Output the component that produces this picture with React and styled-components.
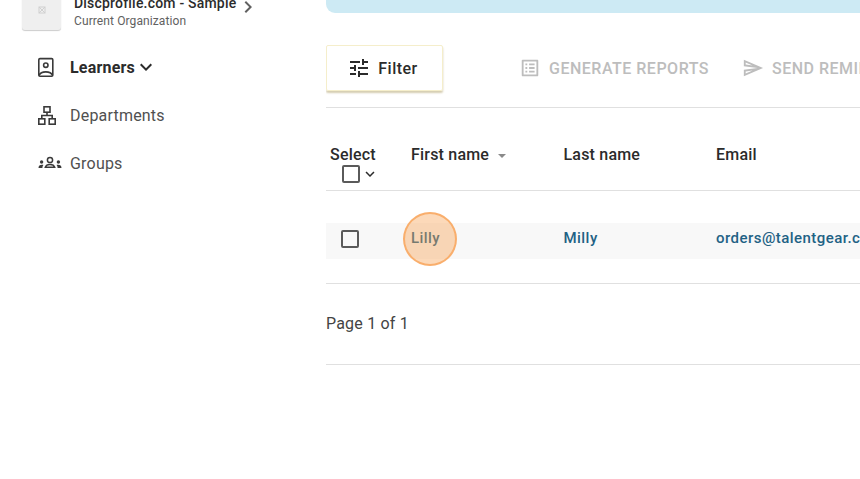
import React from 'react';
import styled, { createGlobalStyle } from 'styled-components';
import { MdTune, MdOutlineListAlt, MdOutlineSend, MdChevronRight, MdKeyboardArrowDown } from 'react-icons/md';

const GlobalStyle = createGlobalStyle`
  html, body {
    margin: 0;
    height: 100%;
    overflow: hidden;
    background: #fff;
    font-family: Roboto, "Liberation Sans", sans-serif;
  }
`;

const Page = styled.div`
  width: 860px;
  height: 479px;
  overflow: hidden;
  display: flex;
`;

const Sidebar = styled.aside`
  width: 326px;
  flex: none;
  margin-top: -10px;
  padding-left: 22px;
  box-sizing: border-box;
`;

const OrgRow = styled.div`
  display: flex;
  align-items: flex-start;
  height: 40px;
`;

const OrgLogo = styled.div`
  width: 39px;
  height: 40px;
  background: #efefef;
  border-radius: 3px;
  box-shadow: 0 1px 1px rgba(0, 0, 0, 0.2);
  display: flex;
  align-items: center;
  justify-content: center;
  color: #d0d0d0;
`;

const OrgText = styled.div`
  margin-left: 13px;
  padding-top: 4px;
`;

const OrgName = styled.div`
  font-size: 14px;
  font-weight: 500;
  line-height: 18px;
  letter-spacing: 0.2px;
  color: #2b2b2b;
  white-space: nowrap;
`;

const OrgSub = styled.div`
  font-size: 12px;
  line-height: 18px;
  letter-spacing: 0.1px;
  color: #616161;
  white-space: nowrap;
`;

const OrgArrow = styled(MdChevronRight)`
  color: #616161;
  font-size: 24px;
  margin-top: 5px;
`;

const Nav = styled.nav`
  margin-top: 13px;
  padding-left: 16px;
`;

const NavItem = styled.div`
  display: flex;
  align-items: center;
  height: 48px;
  font-size: 16px;
  letter-spacing: 0.2px;
  color: ${p => (p.$active ? '#2b2b2b' : '#505050')};
  font-weight: ${p => (p.$active ? 700 : 400)};
`;

const NavIcon = styled.span`
  width: 32px;
  flex: none;
  display: flex;
  align-items: center;
  color: #3a3a3a;
`;

const NavCaret = styled(MdKeyboardArrowDown)`
  font-size: 24px;
  margin-left: -1px;
  color: #2b2b2b;
`;

const Main = styled.main`
  flex: 1;
  min-width: 0;
  overflow: hidden;
`;

const Banner = styled.div`
  height: 13px;
  width: 600px;
  background: #cdeaf4;
  border-radius: 0 0 0 9px;
`;

const Toolbar = styled.div`
  display: flex;
  align-items: center;
  margin-top: 32px;
  height: 46px;
  padding-bottom: 16px;
  border-bottom: 1px solid #e0e0e0;
  width: 700px;
`;

const FilterButton = styled.div`
  width: 117px;
  height: 46px;
  box-sizing: border-box;
  padding-right: 4px;
  display: flex;
  align-items: center;
  justify-content: center;
  gap: 7px;
  border: 1px solid #f5eecb;
  border-radius: 2px;
  box-shadow: 0 2px 2px rgba(150, 130, 60, 0.4);
  font-size: 16px;
  font-weight: 500;
  letter-spacing: 0.5px;
  color: #2b2b2b;
`;

const ActionButton = styled.div`
  display: flex;
  align-items: center;
  flex: none;
  gap: 8px;
  margin-left: ${p => p.$gap}px;
  font-size: 16px;
  font-weight: 500;
  letter-spacing: 0.5px;
  color: #bdbdbd;
  white-space: nowrap;
`;

const TableHead = styled.div`
  display: grid;
  grid-template-columns: 85px 152.5px 152.5px 1fr;
  width: 700px;
  height: 82px;
  border-bottom: 1px solid #e0e0e0;
  font-size: 16px;
  font-weight: 500;
  letter-spacing: 0.2px;
  color: #2b2b2b;
`;

const HeadCell = styled.div`
  padding-top: 38px;
  line-height: 18px;
  display: flex;
  align-items: flex-start;
  gap: 8px;
`;

const SelectCell = styled.div`
  padding: 38px 0 0 4px;
  line-height: 18px;
`;

const SelectControl = styled.div`
  display: flex;
  align-items: center;
  gap: 1px;
  margin: 1px 0 0 12px;
`;

const Checkbox = styled.span`
  display: block;
  width: 14px;
  height: 14px;
  border: 2px solid #5a5a5a;
  border-radius: 2px;
  flex: none;
`;

const SortCaret = styled.span`
  width: 0;
  height: 0;
  margin-top: 8px;
  margin-left: 1px;
  border-left: 4px solid transparent;
  border-right: 4px solid transparent;
  border-top: 4px solid #8a8a8a;
`;

const Row = styled.div`
  display: grid;
  grid-template-columns: 85px 152.5px 152.5px 1fr;
  align-items: center;
  width: 700px;
  height: 36px;
  box-sizing: border-box;
  padding-bottom: 6px;
  margin-top: 32px;
  background: #f8f8f8;
  font-size: 15px;
  font-weight: 500;
  letter-spacing: 0.45px;
  color: #1f6285;
`;

const RowCheck = styled.div`
  padding-left: 15px;
  padding-top: 2px;
`;

const FirstName = styled.div`
  position: relative;
`;

const Highlight = styled.span`
  position: absolute;
  left: -8px;
  top: -17px;
  width: 50px;
  height: 50px;
  border-radius: 50%;
  background: rgba(248, 160, 80, 0.4);
  border: 2px solid rgba(248, 170, 100, 0.9);
`;

const Footer = styled.div`
  width: 700px;
  margin-top: 24px;
  border-top: 1px solid #e0e0e0;
  border-bottom: 1px solid #e0e0e0;
  height: 80px;
  display: flex;
  align-items: center;
  font-size: 16px;
  letter-spacing: 0.2px;
  color: #444;
`;

const PageLabel = styled.span`
  margin-top: -2px;
`;

const PersonIcon = () => (
  <svg width="18" height="20" viewBox="0 0 18 20" fill="none" stroke="currentColor" strokeWidth="1.6">
    <rect x="0.8" y="1.6" width="14" height="17.6" rx="1.2" />
    <circle cx="7.8" cy="8.2" r="2.2" />
    <path d="M1 18.500c1.200-2.800 4.200-3.600 6.800-3.600s5.600.8 6.800 3.600" />
  </svg>
);

const TreeIcon = () => (
  <svg width="18" height="20" viewBox="0 0 18 20" fill="none" stroke="currentColor" strokeWidth="1.6">
    <rect x="6" y="1.800" width="6" height="5.400" />
    <rect x="0.800" y="13.800" width="6" height="5.400" />
    <rect x="11.200" y="13.800" width="6" height="5.400" />
    <path d="M9 7v3.500M3.800 13.800v-3.300h10.400v3.300" />
  </svg>
);

const GroupIcon = () => (
  <svg width="24" height="14" viewBox="0 0 24 14" fill="none" stroke="currentColor" strokeWidth="1.5">
    <circle cx="12" cy="4" r="2.600" />
    <path d="M7.300 11.300c.6-2 2.600-2.900 4.700-2.900s4.100.9 4.700 2.900z" />
    <circle cx="3.600" cy="6" r="1.700" fill="currentColor" stroke="none" />
    <circle cx="20.400" cy="6" r="1.700" fill="currentColor" stroke="none" />
    <path d="M.5 12c0-2.200 1.300-3.200 3.500-3.200 1 0 1.400.2 1.400.2-.7.8-1 1.800-1 3zM23.500 12c0-2.200-1.300-3.200-3.500-3.200-1 0-1.400.2-1.400.2.700.8 1 1.800 1 3z" fill="currentColor" stroke="none" />
  </svg>
);

const LogoGlyph = () => (
  <svg width="8" height="8" viewBox="0 0 8 8" fill="none" stroke="currentColor" strokeWidth="1">
    <rect x="1" y="1" width="6" height="6" />
    <path d="M1 1l6 6M7 1L1 7" />
  </svg>
);

export default function App() {
  return (
    <Page>
      <GlobalStyle />
      <Sidebar>
        <OrgRow>
          <OrgLogo><LogoGlyph /></OrgLogo>
          <OrgText>
            <OrgName>Discprofile.com - Sample</OrgName>
            <OrgSub>Current Organization</OrgSub>
          </OrgText>
          <OrgArrow />
        </OrgRow>
        <Nav>
          <NavItem $active>
            <NavIcon><PersonIcon /></NavIcon>
            Learners
            <NavCaret />
          </NavItem>
          <NavItem>
            <NavIcon><TreeIcon /></NavIcon>
            Departments
          </NavItem>
          <NavItem>
            <NavIcon><GroupIcon /></NavIcon>
            Groups
          </NavItem>
        </Nav>
      </Sidebar>
      <Main>
        <Banner />
        <Toolbar>
          <FilterButton>
            <MdTune size={24} />
            Filter
          </FilterButton>
          <ActionButton $gap={76}>
            <MdOutlineListAlt size={22} />
            GENERATE REPORTS
          </ActionButton>
          <ActionButton $gap={33}>
            <MdOutlineSend size={22} />
            SEND REMINDERS
          </ActionButton>
        </Toolbar>
        <TableHead>
          <SelectCell>
            Select
            <SelectControl>
              <Checkbox />
              <MdKeyboardArrowDown size={18} />
            </SelectControl>
          </SelectCell>
          <HeadCell>First name <SortCaret /></HeadCell>
          <HeadCell>Last name</HeadCell>
          <HeadCell>Email</HeadCell>
        </TableHead>
        <Row>
          <RowCheck><Checkbox /></RowCheck>
          <FirstName>
            Lilly
            <Highlight />
          </FirstName>
          <div>Milly</div>
          <div>orders@talentgear.com</div>
        </Row>
        <Footer><PageLabel>Page 1 of 1</PageLabel></Footer>
      </Main>
    </Page>
  );
}
